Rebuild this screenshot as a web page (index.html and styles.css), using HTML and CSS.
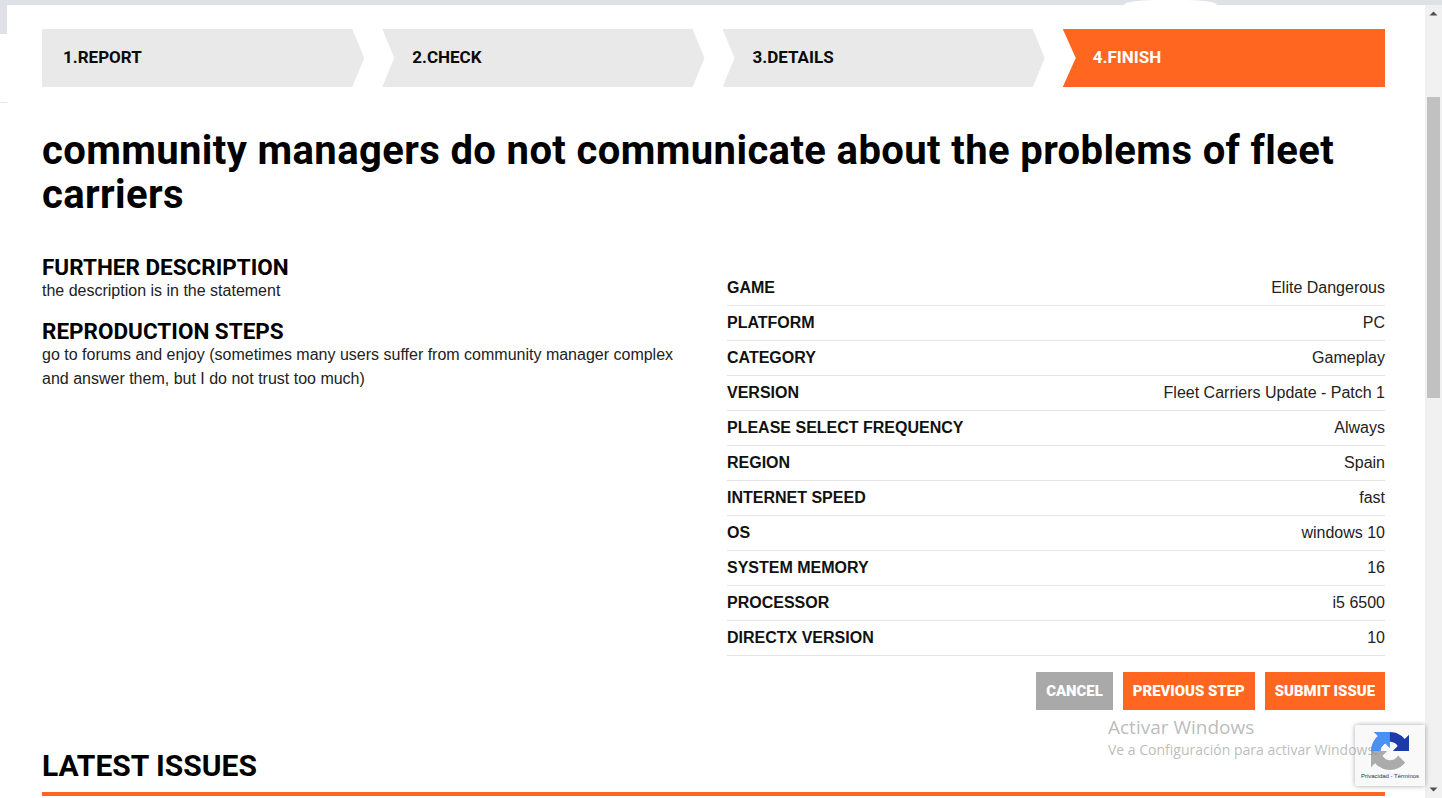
FILE: index.html
```html
<!DOCTYPE html>
<html lang="en">
<head>
<meta charset="utf-8">
<title>Report issue</title>
<link rel="stylesheet" href="styles.css">
</head>
<body>
<div class="page">
  <div class="topband"><span class="bump"></span></div>
  <div class="body">
    <div class="strip"><div class="strip-grey"></div><div class="strip-line"></div></div>
    <main class="modal">
      <ol class="steps">
        <li class="step first">1.REPORT</li>
        <li class="step">2.CHECK</li>
        <li class="step">3.DETAILS</li>
        <li class="step active">4.FINISH</li>
      </ol>
      <h1 class="title">community managers do not communicate about the problems of fleet carriers</h1>
      <div class="columns">
        <section class="desc">
          <h2 class="sub">FURTHER DESCRIPTION</h2>
          <p class="text">the description is in the statement</p>
          <h2 class="sub second">REPRODUCTION STEPS</h2>
          <p class="text">go to forums and enjoy (sometimes many users suffer from community manager complex and answer them, but I do not trust too much)</p>
        </section>
        <section class="specs">
          <dl class="table">
            <div class="row"><dt>GAME</dt><dd>Elite Dangerous</dd></div>
            <div class="row"><dt>PLATFORM</dt><dd>PC</dd></div>
            <div class="row"><dt>CATEGORY</dt><dd>Gameplay</dd></div>
            <div class="row"><dt>VERSION</dt><dd>Fleet Carriers Update - Patch 1</dd></div>
            <div class="row"><dt>PLEASE SELECT FREQUENCY</dt><dd>Always</dd></div>
            <div class="row"><dt>REGION</dt><dd>Spain</dd></div>
            <div class="row"><dt>INTERNET SPEED</dt><dd>fast</dd></div>
            <div class="row"><dt>OS</dt><dd>windows 10</dd></div>
            <div class="row"><dt>SYSTEM MEMORY</dt><dd>16</dd></div>
            <div class="row"><dt>PROCESSOR</dt><dd>i5 6500</dd></div>
            <div class="row"><dt>DIRECTX VERSION</dt><dd>10</dd></div>
          </dl>
          <div class="actions">
            <button class="btn grey">CANCEL</button>
            <button class="btn orange">PREVIOUS STEP</button>
            <button class="btn orange">SUBMIT ISSUE</button>
          </div>
        </section>
      </div>
      <h2 class="latest">LATEST ISSUES</h2>
    </main>
    <div class="scrollbar">
      <svg class="arrow" width="17" height="17" viewBox="0 0 17 17"><path d="M4.5 10.5h8L8.500 6.500z" fill="#505050"/></svg>
      <div class="track"><div class="thumb"></div></div>
      <svg class="arrow" width="17" height="17" viewBox="0 0 17 17"><path d="M4.500 6.500h8l-4 4z" fill="#505050"/></svg>
    </div>
  </div>
  <div class="badge">
    <svg class="badge-logo" width="38" height="38" viewBox="0 0 64 64">
      <path d="M64 31.955l-.033-1.37V4.687l-7.16 7.16C50.948 4.674 42.033.093 32.05.093c-10.4 0-19.622 4.96-25.458 12.64l11.736 11.86a15.55 15.55 0 0 1 4.754-5.334c2.05-1.6 4.952-2.906 8.968-2.906.485 0 .86.057 1.135.163 4.976.393 9.288 3.14 11.828 7.124l-8.307 8.307 26.3.004" fill="#1c3aa9"/>
      <path d="M31.862.094l-1.37.033H4.594l7.16 7.16C4.58 13.147 0 22.06 0 32.046c0 10.4 4.96 19.622 12.64 25.458l11.86-11.736a15.55 15.55 0 0 1-5.334-4.754c-1.6-2.05-2.906-4.952-2.906-8.968 0-.485.057-.86.163-1.135.393-4.976 3.14-9.288 7.124-11.828l8.307 8.307.004-26.3" fill="#4a90f5"/>
      <path d="M.001 32.045l.033 1.37v25.898l7.16-7.16c5.86 7.173 14.774 11.754 24.76 11.754 10.4 0 19.622-4.96 25.458-12.64L45.674 39.407a15.55 15.55 0 0 1-4.754 5.334c-2.05 1.6-4.952 2.906-8.968 2.906-.485 0-.86-.057-1.135-.163-4.976-.393-9.288-3.14-11.828-7.124l8.307-8.307-26.3-.004" fill="#ababab"/>
    </svg>
    <div class="badge-text">Privacidad - Términos</div>
  </div>
  <div class="watermark">
    <div class="wm-title">Activar Windows</div>
    <div class="wm-sub">Ve a Configuración para activar Windows.</div>
  </div>
</div>
</body>
</html>
```
FILE: styles.css
```css
* { box-sizing: border-box; }
html, body { margin: 0; padding: 0; height: 100%; overflow: hidden; background: #fff; }
body { font-family: "Liberation Sans", Arial, sans-serif; font-size: 16px; color: #111; }

.page { position: relative; width: 1442px; height: 798px; overflow: hidden; display: flex; flex-direction: column; }
.topband { height: 5px; flex: none; background: #dee2e6; display: flex; padding-left: 1124px; }
.bump { width: 93px; height: 5px; background: #fff; border-radius: 30px 30px 0 0 / 5px 5px 0 0; }
.body { flex: 1; display: flex; min-height: 0; }

.strip { width: 7px; flex: none; }
.strip-grey { height: 29px; background: #dee2e6; }
.strip-line { height: 1px; margin-top: 68px; background: #e6e6e6; }

.modal { flex: 1; min-width: 0; padding: 24px 40px 0 35px; background: #fff; overflow: hidden; }
.scrollbar { width: 17px; flex: none; background: #f1f1f1; display: flex; flex-direction: column; }
.arrow { flex: none; display: block; }
.track { flex: 1; padding-top: 75px; }
.thumb { width: 13px; height: 301px; margin: 0 auto; background: #c1c1c1; }

.steps { list-style: none; margin: 0; padding: 0; display: grid; grid-template-columns: repeat(4, 1fr); gap: 18px; }
.step { height: 58px; display: flex; align-items: center; padding: 0 0 2px 30px; background: #e9e9e9; color: #0b0b0b;
  font-family: Roboto, "Liberation Sans", sans-serif; font-weight: 700; font-size: 17px;
  clip-path: polygon(0 0, calc(100% - 12px) 0, 100% 50%, calc(100% - 12px) 100%, 0 100%, 12px 50%); }
.step.first { padding-left: 21px; clip-path: polygon(0 0, calc(100% - 12px) 0, 100% 50%, calc(100% - 12px) 100%, 0 100%); }
.step.active { background: #ff6720; color: #fff; clip-path: polygon(0 0, 100% 0, 100% 100%, 0 100%, 13px 50%); }

.title { margin: 42px 0 0; font-family: Roboto, "Liberation Sans", sans-serif; font-weight: 700; font-size: 40px; line-height: 44px; letter-spacing: .38px; color: #000; }

.columns { display: grid; grid-template-columns: 635px 658px; column-gap: 50px; margin-top: 34px; }
.sub { margin: 0; font-family: Roboto, "Liberation Sans", sans-serif; font-weight: 700; font-size: 22.500px; line-height: 24px; color: #000; }
.sub.second { margin-top: 16px; }
.text { margin: 0; line-height: 24px; color: #222; }
.desc { padding-top: 4px; }

.specs { padding-top: 20px; }
.table { margin: 0; }
.row { height: 35px; display: flex; justify-content: space-between; align-items: center; border-bottom: 1px solid #e6e6e6; }
.row dt { font-weight: 700; color: #111; }
.row dd { margin: 0; color: #222; }

.actions { display: flex; justify-content: flex-end; gap: 10px; margin-top: 16px; }
.btn { height: 38px; padding: 0 10px; border: 0; color: #fff; font-family: Roboto, "Liberation Sans", sans-serif; font-weight: 900; font-size: 14.900px; }
.btn.grey { background: #a9a9a9; }
.btn.orange { background: #ff6720; }

.latest { margin: 37px 0 0; padding-bottom: 7px; border-bottom: 4px solid #ff6720; font-family: Roboto, "Liberation Sans", sans-serif; font-weight: 700; font-size: 30px; line-height: 38px; color: #000; }

.badge { position: absolute; left: 1355px; top: 725px; width: 70px; height: 61px; background: #f9f9f9; border-radius: 2px 0 0 2px; box-shadow: 0 0 5px rgba(0,0,0,.35); display: flex; flex-direction: column; align-items: center; padding-top: 7px; }
.badge-logo { display: block; }
.badge-text { font-size: 6px; line-height: 8px; margin-top: 2px; color: #333; white-space: nowrap; }

.watermark { position: absolute; left: 1108px; top: 714px; font-family: "Open Sans", sans-serif; color: rgba(130,130,130,.55); white-space: nowrap; pointer-events: none; }
.wm-title { font-size: 19px; line-height: 26px; }
.wm-sub { font-size: 14px; line-height: 19px; }
```
